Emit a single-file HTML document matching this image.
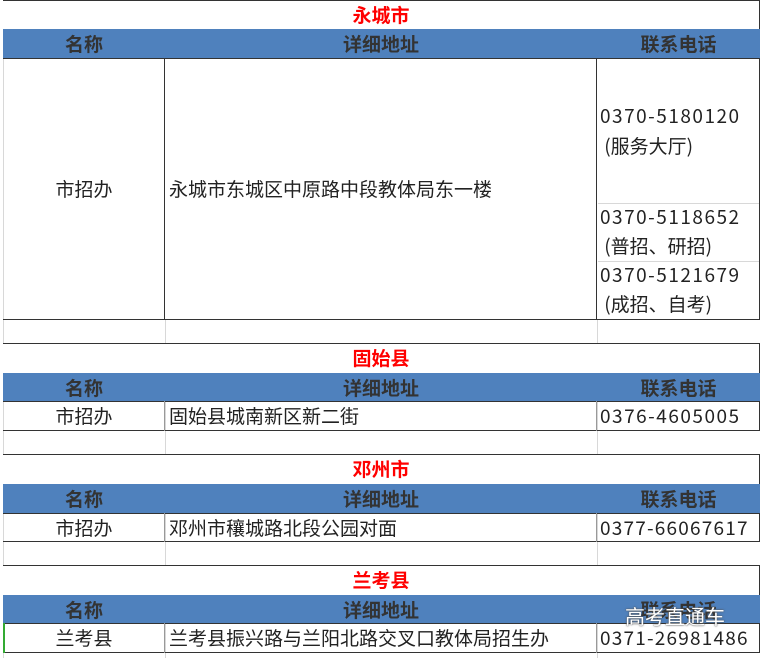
<!DOCTYPE html>
<html><head><meta charset="utf-8"><style>
body{margin:0;width:763px;height:658px;background:#fff;position:relative;overflow:hidden;font-family:"Noto Sans CJK SC","Liberation Sans",sans-serif;color:#222}
div{position:absolute;box-sizing:border-box}
.t{left:3px;width:757px;border-top:1.5px solid #333;border-bottom:1.5px solid #333;border-right:1.5px solid #333;color:#f00;font-weight:bold;font-size:19px;text-align:center;background:#fff}
.h{left:3px;width:757px;background:#4f81bd;color:#333;font-weight:bold;font-size:19px;border-bottom:1.5px solid #333}
.h span,.r span{position:absolute;top:0;height:100%;display:flex;align-items:center}
.r{left:3px;width:757px;font-size:19px;border-bottom:1.5px solid #333;border-right:1.5px solid #333}
.vl{width:1px;background:#d8d8d8}
.hl{height:1px;background:#d8d8d8}
.vd{width:1.5px;background:#333}
.p{font-size:19px;line-height:30px;white-space:nowrap}
.n{letter-spacing:1.5px}
</style></head><body>
<div class="vl" style="left:3px;top:0;height:658px"></div>
<div class="vl" style="left:165px;top:320px;height:338px"></div>
<div class="vl" style="left:597px;top:320px;height:338px"></div>

<div class="t" style="top:0;height:30px;line-height:27px">永城市</div>
<div class="h" style="top:29px;height:30px"><span style="left:0;width:162px;justify-content:center">名称</span><span style="left:162px;width:432px;justify-content:center">详细地址</span><span style="left:594px;width:163px;justify-content:center">联系电话</span></div>
<div class="r" style="top:58px;height:262px"><span style="left:0;width:162px;justify-content:center">市招办</span><span style="left:166px">永城市东城区中原路中段教体局东一楼</span></div>
<div class="vd" style="left:164px;top:58px;height:262px;width:1px"></div>
<div class="vd" style="left:596px;top:58px;height:262px;width:1px"></div>
<div class="hl" style="left:598px;top:203px;width:161px"></div>
<div class="hl" style="left:598px;top:261px;width:161px"></div>
<div class="p" style="left:600px;top:101px"><span class="n">0370-5180120</span><br>&nbsp;(服务大厅)</div>
<div class="p" style="left:600px;top:202px;line-height:29px"><span class="n">0370-5118652</span><br>&nbsp;(普招、研招)</div>
<div class="p" style="left:600px;top:260px;line-height:29px"><span class="n">0370-5121679</span><br>&nbsp;(成招、自考)</div>

<div class="t" style="top:343px;height:31px;line-height:27px">固始县</div>
<div class="h" style="top:373px;height:29px"><span style="left:0;width:162px;justify-content:center">名称</span><span style="left:162px;width:432px;justify-content:center">详细地址</span><span style="left:594px;width:163px;justify-content:center">联系电话</span></div>
<div class="r" style="top:401px;height:30px"><span style="left:0;width:162px;justify-content:center">市招办</span><span style="left:166px">固始县城南新区新二街</span><span class="n" style="left:597px">0376-4605005</span></div>
<div class="vd" style="left:164px;top:401px;height:30px;width:1px;background:#999"></div>
<div class="vd" style="left:596px;top:401px;height:30px;width:1px;background:#999"></div>

<div class="t" style="top:454px;height:31px;line-height:27px">邓州市</div>
<div class="h" style="top:484px;height:30px"><span style="left:0;width:162px;justify-content:center">名称</span><span style="left:162px;width:432px;justify-content:center">详细地址</span><span style="left:594px;width:163px;justify-content:center">联系电话</span></div>
<div class="r" style="top:513px;height:29px"><span style="left:0;width:162px;justify-content:center">市招办</span><span style="left:166px">邓州市穰城路北段公园对面</span><span class="n" style="left:597px;letter-spacing:1.2px">0377-66067617</span></div>
<div class="vd" style="left:164px;top:513px;height:29px;width:1px;background:#999"></div>
<div class="vd" style="left:596px;top:513px;height:29px;width:1px;background:#999"></div>

<div class="t" style="top:565px;height:31px;line-height:27px">兰考县</div>
<div class="h" style="top:595px;height:29px"><span style="left:0;width:162px;justify-content:center">名称</span><span style="left:162px;width:432px;justify-content:center">详细地址</span><span style="left:594px;width:163px;justify-content:center">联系电话</span></div>
<div class="r" style="top:623px;height:30px"><span style="left:0;width:162px;justify-content:center">兰考县</span><span style="left:166px">兰考县振兴路与兰阳北路交叉口教体局招生办</span><span class="n" style="left:597px;letter-spacing:1.2px">0371-26981486</span></div>
<div class="vd" style="left:164px;top:623px;height:30px;width:1px;background:#999"></div>
<div class="vd" style="left:596px;top:623px;height:30px;width:1px;background:#999"></div>
<div style="left:3px;top:623px;width:2px;height:30px;background:#3a3"></div>
<div style="left:625px;top:602px;font-size:20px;color:#fff;text-shadow:0 0 2px #555,0 0 1px #555;line-height:28px">高考直通车</div>
</body></html>
